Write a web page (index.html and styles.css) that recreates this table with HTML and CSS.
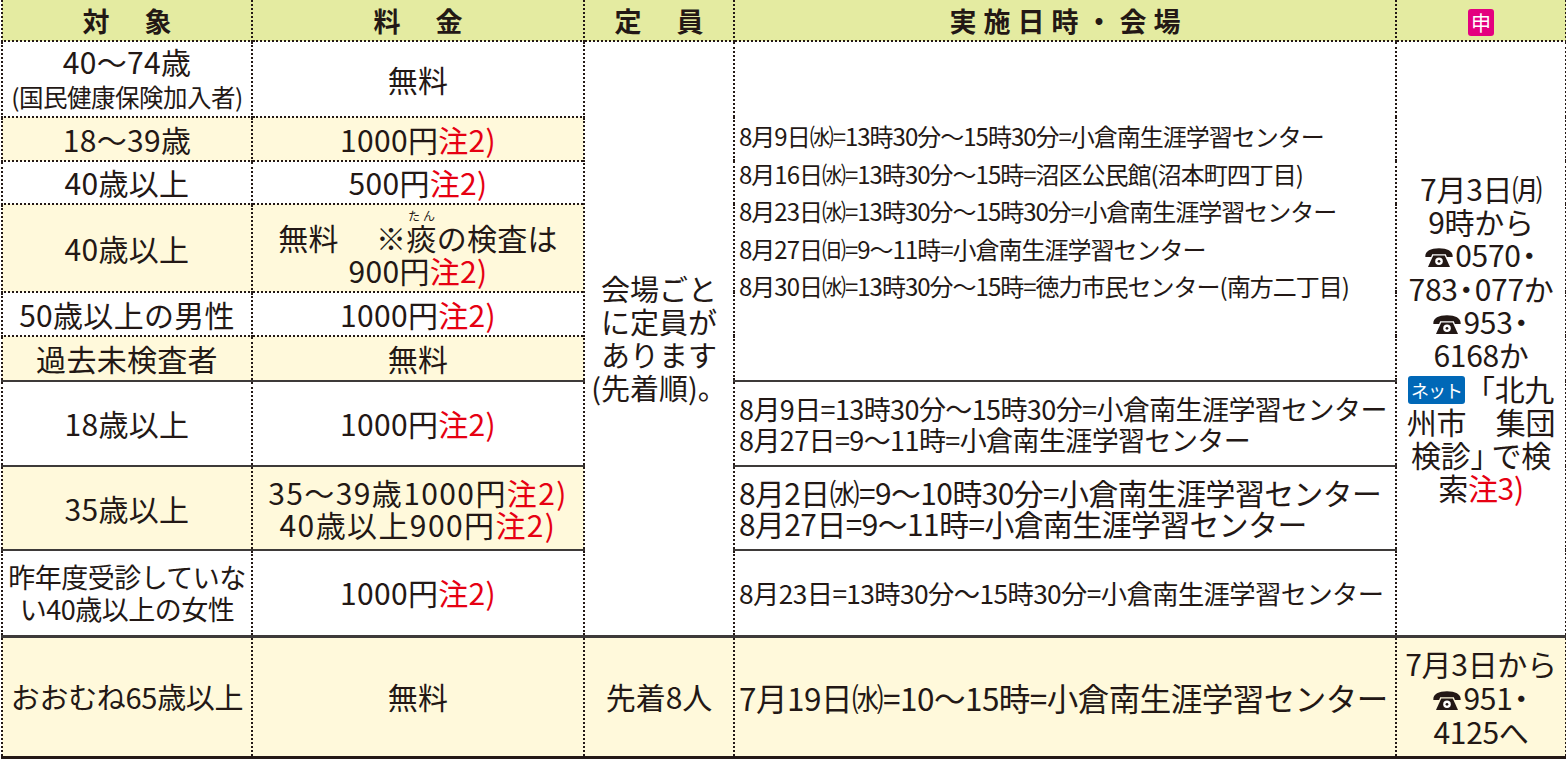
FILE: index.html
```html
<!DOCTYPE html>
<html lang="ja">
<head>
<meta charset="utf-8">
<title>検診日程</title>
<link rel="stylesheet" href="styles.css">
</head>
<body>
<table class="sched">
  <colgroup>
    <col class="c1"><col class="c2"><col class="c3"><col class="c4"><col class="c5">
  </colgroup>
  <thead>
    <tr class="head">
      <th><span class="hs">対　象</span></th>
      <th><span class="hs">料　金</span></th>
      <th><span class="hs">定　員</span></th>
      <th><span class="hw">実施日時・会場</span></th>
      <th><span class="mark">申</span></th>
    </tr>
  </thead>
  <tbody>
    <tr class="r1">
      <td class="tg"><span class="big">40～74歳</span><br><span class="sm">(国民健康保険加入者)</span></td>
      <td class="fee">無料</td>
      <td rowspan="9" class="cap">会場ごと<br>に定員が<br>あります<br>(先着順)。</td>
      <td rowspan="6" class="dt dt-top sb">8月9日㈬=13時30分～15時30分=小倉南生涯学習センター<br>8月16日㈬=13時30分～15時=沼区公民館(沼本町四丁目)<br>8月23日㈬=13時30分～15時30分=小倉南生涯学習センター<br>8月27日㈰=9～11時=小倉南生涯学習センター<br>8月30日㈬=13時30分～15時=徳力市民センター(南方二丁目)</td>
      <td rowspan="9" class="ap">7月3日㈪<br>9時から<br><svg class="tel" viewBox="0 0 28 20" aria-hidden="true"><path d="M1 8.5C1 4 6 1.2 14 1.2S27 4 27 8.5V9.5H21.5L20.5 6.8H7.5L6.5 9.5H1Z"/><path d="M8.5 8.2H19.5L24.5 19H3.5Z"/><circle cx="14" cy="13.6" r="3.6" fill="#fff"/><circle cx="14" cy="13.6" r="1.3"/></svg>057<span class="nd">0・</span><br>78<span class="nd">3・</span>077か<br><svg class="tel" viewBox="0 0 28 20" aria-hidden="true"><path d="M1 8.5C1 4 6 1.2 14 1.2S27 4 27 8.5V9.5H21.5L20.5 6.8H7.5L6.5 9.5H1Z"/><path d="M8.5 8.2H19.5L24.5 19H3.5Z"/><circle cx="14" cy="13.6" r="3.6" fill="#fff"/><circle cx="14" cy="13.6" r="1.3"/></svg>95<span class="nd">3・</span><br>6168か<br><span class="net">ネット</span>「北九<br>州市　集団<br>検診<span class="br2">」</span>で検<br>索<span class="note">注3)</span></td>
    </tr>
    <tr class="r2 cream">
      <td class="tg">18～39歳</td>
      <td class="fee">1000円<span class="note">注2)</span></td>
    </tr>
    <tr class="r3">
      <td class="tg">40歳以上</td>
      <td class="fee">500円<span class="note">注2)</span></td>
    </tr>
    <tr class="r4 cream">
      <td class="tg">40歳以上</td>
      <td class="fee">無料　 ※<ruby>痰<rt>たん</rt></ruby>の検査は<br>900円<span class="note">注2)</span></td>
    </tr>
    <tr class="r5">
      <td class="tg">50歳以上の男性</td>
      <td class="fee">1000円<span class="note">注2)</span></td>
    </tr>
    <tr class="r6 cream">
      <td class="tg sb">過去未検査者</td>
      <td class="fee sb">無料</td>
    </tr>
    <tr class="r7">
      <td class="tg sb">18歳以上</td>
      <td class="fee sb">1000円<span class="note">注2)</span></td>
      <td class="dt dt-mid sb">8月9日=13時30分～15時30分=小倉南生涯学習センター<br>8月27日=9～11時=小倉南生涯学習センター</td>
    </tr>
    <tr class="r8 cream">
      <td class="tg sb">35歳以上</td>
      <td class="fee fee-w sb">35～39歳1000円<span class="note">注2)</span><br>40歳以上900円<span class="note">注2)</span></td>
      <td class="dt dt-big sb">8月2日㈬=9～10時30分=小倉南生涯学習センター<br>8月27日=9～11時=小倉南生涯学習センター</td>
    </tr>
    <tr class="r9">
      <td class="tg tg-s">昨年度受診していな<br>い40歳以上の女性</td>
      <td class="fee">1000円<span class="note">注2)</span></td>
      <td class="dt dt-low">8月23日=13時30分～15時30分=小倉南生涯学習センター</td>
    </tr>
    <tr class="r10">
      <td class="tg">おおむね65歳以上</td>
      <td class="fee">無料</td>
      <td class="cap">先着8人</td>
      <td class="dt dt-last">7月19日㈬=10～15時=小倉南生涯学習センター</td>
      <td class="ap ap-last">7月3日から<br><svg class="tel" viewBox="0 0 28 20" aria-hidden="true"><path d="M1 8.5C1 4 6 1.2 14 1.2S27 4 27 8.5V9.5H21.5L20.5 6.8H7.5L6.5 9.5H1Z"/><path d="M8.5 8.2H19.5L24.5 19H3.5Z"/><circle cx="14" cy="13.6" r="3.6" fill="#fff"/><circle cx="14" cy="13.6" r="1.3"/></svg>95<span class="nd">1・</span><br>4125へ</td>
    </tr>
  </tbody>
</table>
</body>
</html>
```

FILE: styles.css
```css
* {
  box-sizing: border-box;
}

html,
body {
  margin: 0;
  padding: 0;
  background: #ffffff;
}

body {
  font-family: "Noto Sans CJK JP", "Noto Sans", sans-serif;
  color: #231815;
}

.sched {
  border-collapse: collapse;
  table-layout: fixed;
  width: 1564px;
  margin-left: 1px;
}

col.c1 { width: 250px; }
col.c2 { width: 332px; }
col.c3 { width: 150px; }
col.c4 { width: 662px; }
col.c5 { width: 170px; }

.sched th,
.sched td {
  border: 2px dotted #231815;
  padding: 0;
  vertical-align: middle;
  text-align: center;
  font-weight: 400;
  white-space: nowrap;
}

.sched th {
  border-top: none;
  background: #e4eba1;
  font-size: 27px;
  font-weight: 700;
  line-height: 1;
}

.head { height: 41px; }
.r1 { height: 76px; }
.r2 { height: 44px; }
.r3 { height: 43px; }
.r4 { height: 88px; }
.r5 { height: 44px; }
.r6 { height: 45px; }
.r7 { height: 85px; }
.r8 { height: 84px; }
.r9 { height: 86px; }
.r10 { height: 121px; }

.hs {
  letter-spacing: 4px;
  margin-right: -4px;
}

.hw {
  letter-spacing: 7px;
  margin-right: -7px;
}

.mark {
  display: inline-block;
  width: 26px;
  height: 27px;
  border-radius: 3px;
  background: #e4007f;
  color: #ffffff;
  font-size: 20px;
  font-weight: 400;
  line-height: 27px;
  vertical-align: middle;
}

.cream > td:nth-child(-n+2) {
  background: #fff9db;
}

.r10 > td {
  background: #fff9db;
  border-top: 3px solid #3e3a39;
  border-bottom: 3px solid #231815;
}

.sched td.sb {
  border-bottom: 2px solid #3e3a39;
}

.tg,
.fee {
  font-size: 30px;
  line-height: 33px;
  letter-spacing: 0.3px;
}

.tg .big {
  font-size: 30px;
}

.tg .sm {
  font-size: 24.5px;
  letter-spacing: -0.5px;
}

.tg-s {
  font-size: 27px;
  letter-spacing: -0.5px;
  line-height: 32px;
}

.r10 .tg {
  font-size: 29px;
  letter-spacing: -0.3px;
}

.fee-w {
  letter-spacing: 1.4px;
  line-height: 32px;
}

.note {
  color: #e60012;
}

ruby rt {
  font-size: 12px;
  letter-spacing: 0;
}

.cap {
  font-size: 29px;
  line-height: 33px;
}

.r10 .cap {
  font-size: 30px;
}

.sched td.dt {
  text-align: left;
  padding-left: 4px;
}

.dt-top {
  font-size: 24px;
  line-height: 37.5px;
  letter-spacing: -1px;
}

.dt-mid {
  font-size: 27px;
  line-height: 31px;
  letter-spacing: -0.6px;
}

.dt-big {
  font-size: 29.8px;
  line-height: 31px;
  letter-spacing: -0.5px;
}

.dt-low {
  font-size: 26.3px;
  letter-spacing: -0.6px;
}

.dt-last {
  font-size: 31.5px;
  letter-spacing: -0.5px;
}

.ap {
  font-size: 30px;
  line-height: 33.3px;
  letter-spacing: -0.3px;
}

.ap-last {
  line-height: 34px;
}

.nd {
  letter-spacing: -0.22em;
}

.br2 {
  letter-spacing: -0.3em;
}

.tel {
  width: 30px;
  height: 21px;
  fill: #231815;
  vertical-align: -1px;
  margin-right: 1px;
}

.net {
  display: inline-block;
  height: 28px;
  padding: 0 3px;
  border-radius: 3px;
  background: #0068b7;
  color: #ffffff;
  font-size: 18px;
  line-height: 28px;
  letter-spacing: -1px;
  vertical-align: 3px;
}
```
